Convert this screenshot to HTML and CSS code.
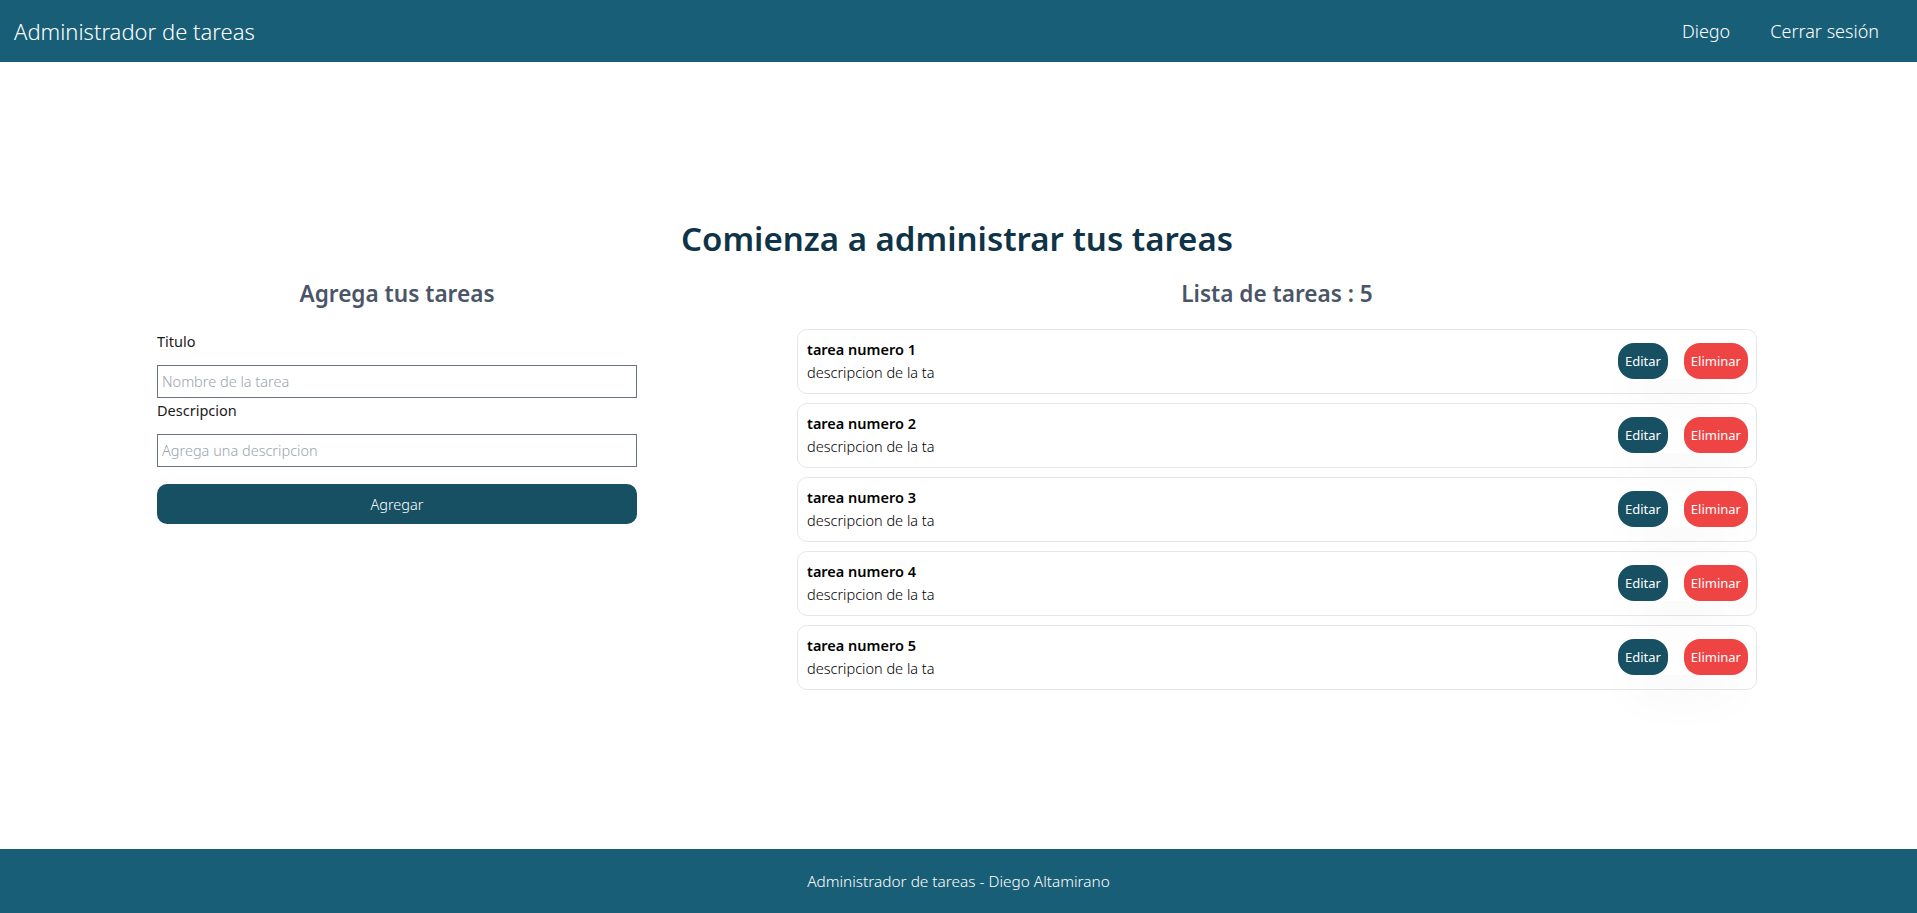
FILE: index.html
```html
<!DOCTYPE html>
<html lang="es">
<head>
<meta charset="utf-8">
<title>Administrador de tareas</title>
<link rel="stylesheet" href="styles.css">
</head>
<body>
<header class="topbar">
  <a class="brand" href="#">Administrador de tareas</a>
  <nav class="nav">
    <a href="#">Diego</a>
    <a href="#">Cerrar sesión</a>
  </nav>
</header>
<main class="main">
  <div class="content">
    <h1 class="page-title">Comienza a administrar tus tareas</h1>
    <div class="columns">
      <section class="form-col">
        <h2 class="section-title">Agrega tus tareas</h2>
        <form class="task-form">
          <label class="label" for="titulo">Titulo</label>
          <input class="input" id="titulo" type="text" placeholder="Nombre de la tarea">
          <label class="label" for="desc">Descripcion</label>
          <input class="input" id="desc" type="text" placeholder="Agrega una descripcion">
          <button class="btn-add" type="button">Agregar</button>
        </form>
      </section>
      <section class="list-col">
        <h2 class="section-title">Lista de tareas : 5</h2>
        <ul class="task-list">
          <li class="task">
            <div class="task-text"><p class="task-title">tarea numero 1</p><p class="task-desc">descripcion de la ta</p></div>
            <div class="task-actions"><button class="btn btn-edit">Editar</button><button class="btn btn-del">Eliminar</button></div>
          </li>
          <li class="task">
            <div class="task-text"><p class="task-title">tarea numero 2</p><p class="task-desc">descripcion de la ta</p></div>
            <div class="task-actions"><button class="btn btn-edit">Editar</button><button class="btn btn-del">Eliminar</button></div>
          </li>
          <li class="task">
            <div class="task-text"><p class="task-title">tarea numero 3</p><p class="task-desc">descripcion de la ta</p></div>
            <div class="task-actions"><button class="btn btn-edit">Editar</button><button class="btn btn-del">Eliminar</button></div>
          </li>
          <li class="task">
            <div class="task-text"><p class="task-title">tarea numero 4</p><p class="task-desc">descripcion de la ta</p></div>
            <div class="task-actions"><button class="btn btn-edit">Editar</button><button class="btn btn-del">Eliminar</button></div>
          </li>
          <li class="task">
            <div class="task-text"><p class="task-title">tarea numero 5</p><p class="task-desc">descripcion de la ta</p></div>
            <div class="task-actions"><button class="btn btn-edit">Editar</button><button class="btn btn-del">Eliminar</button></div>
          </li>
        </ul>
      </section>
    </div>
  </div>
</main>
<footer class="footer">Administrador de tareas - Diego Altamirano</footer>
</body>
</html>
```

FILE: styles.css
```css
* { box-sizing: border-box; }
html, body { margin: 0; padding: 0; }
body {
  font-family: "Noto Sans", "Open Sans", sans-serif;
  color: #111;
  background: #fff;
  min-height: 100vh;
  display: flex;
  flex-direction: column;
}
a { color: inherit; text-decoration: none; }
p { margin: 0; }

.topbar {
  height: 62px;
  background: #185e76;
  color: #fff;
  display: flex;
  align-items: center;
  justify-content: space-between;
  padding: 0 38px 0 14px;
}
.brand { font-size: 22px; font-weight: 300; }
.nav { display: flex; gap: 40px; font-size: 18px; font-weight: 300; }

.main {
  flex: 1;
  display: flex;
  align-items: center;
  padding-left: 157px;
}
.content { width: 1600px; }
.page-title {
  margin: 0 0 22px;
  text-align: center;
  font-size: 33px;
  line-height: 34px;
  font-weight: 600;
  color: #0f3347;
}
.columns {
  display: flex;
  justify-content: space-between;
  align-items: flex-start;
}
.form-col { width: 480px; }
.list-col { width: 960px; }
.section-title {
  margin: 0 0 19px;
  text-align: center;
  font-size: 22.6px;
  line-height: 32px;
  font-weight: 600;
  color: #4a5568;
}
.task-form { display: flex; flex-direction: column; }
.label {
  font-size: 14.5px;
  line-height: 24px;
  font-weight: 400;
  color: #1a1a1a;
  margin-bottom: 12px;
}
.input {
  height: 33px;
  border: 1px solid #6b7280;
  border-radius: 0;
  padding: 0 4px;
  font-family: inherit;
  font-size: 14.5px;
  font-weight: 300;
  outline: none;
}
.input::placeholder { color: #9ca3af; }
.btn-add {
  margin-top: 17px;
  height: 40px;
  border: none;
  border-radius: 10px;
  background: #174f63;
  color: #fff;
  font-family: inherit;
  font-size: 14.5px;
  font-weight: 300;
}

.task-list {
  list-style: none;
  margin: 0;
  padding: 0;
  display: flex;
  flex-direction: column;
  gap: 9px;
}
.task {
  height: 65px;
  border: 1px solid #e5e7eb;
  border-radius: 10px;
  padding: 0 8px 0 9px;
  display: flex;
  align-items: center;
  justify-content: space-between;
}
.task-title { font-size: 14.5px; line-height: 23px; font-weight: 600; color: #000; }
.task-desc { font-size: 14.5px; line-height: 23px; font-weight: 300; color: #000; }
.task-actions {
  display: flex;
  gap: 16px;
  box-shadow: 0 25px 50px -12px rgba(0,0,0,0.09);
  border-radius: 18px;
}
.btn {
  height: 36px;
  border: none;
  border-radius: 16px;
  padding: 0 7px;
  color: #fff;
  font-family: inherit;
  font-size: 13px;
  font-weight: 400;
}
.btn-edit { background: #174f63; }
.btn-del { background: #ef4444; }

.footer {
  height: 64px;
  background: #185e76;
  color: #fff;
  display: flex;
  align-items: center;
  justify-content: center;
  font-size: 15.4px;
  font-weight: 300;
}
```
